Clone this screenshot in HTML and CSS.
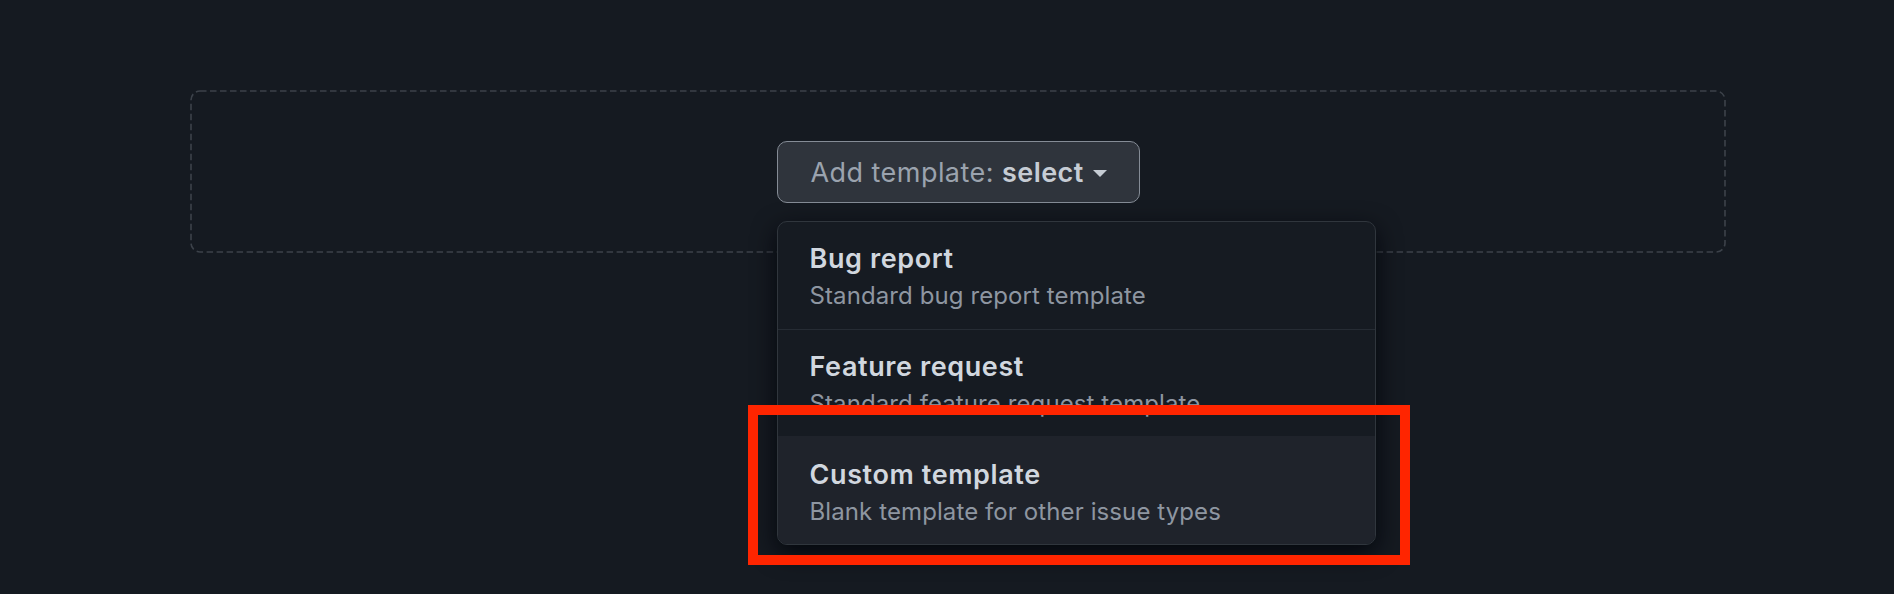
FILE: index.html
```html
<!DOCTYPE html>
<html lang="en">
<head>
<meta charset="utf-8">
<title>Add template</title>
<link rel="stylesheet" href="styles.css">
</head>
<body>
<main class="page">
  <section class="dropzone">
    <svg class="dash" width="1536" height="163" viewBox="0 0 1536 163" aria-hidden="true">
      <rect x="1" y="1" width="1534" height="161" rx="9" ry="9" fill="none" stroke="#3c424a" stroke-width="1.6" stroke-dasharray="6.5 3.5"/>
    </svg>
    <div class="menu">
      <button class="select-btn" type="button">
        <span class="btn-label">Add template: <strong>select</strong></span>
        <span class="caret"></span>
      </button>
      <div class="dropdown">
        <div class="item">
          <div class="item-title">Bug report</div>
          <div class="item-desc">Standard bug report template</div>
        </div>
        <div class="item">
          <div class="item-title">Feature request</div>
          <div class="item-desc">Standard feature request template</div>
        </div>
        <div class="item item-hover">
          <div class="item-title">Custom template</div>
          <div class="item-desc">Blank template for other issue types</div>
        </div>
      </div>
    </div>
  </section>
</main>
<div class="highlight"></div>
</body>
</html>
```

FILE: styles.css
```css
html, body {
  margin: 0;
  padding: 0;
}
body {
  background: #151a21;
  width: 1894px;
  height: 594px;
  overflow: hidden;
  position: relative;
  font-family: Inter, "Noto Sans", "Liberation Sans", sans-serif;
  -webkit-font-smoothing: antialiased;
}
.page {
  padding: 90px 0 0 190px;
}
.dropzone {
  position: relative;
  width: 1536px;
  height: 163px;
  box-sizing: border-box;
  display: flex;
  justify-content: center;
  padding-top: 51px;
}
.dash {
  position: absolute;
  left: 0;
  top: 0;
}
.menu {
  position: relative;
  height: 62px;
}
.select-btn {
  height: 62px;
  width: 363px;
  box-sizing: border-box;
  display: flex;
  align-items: center;
  gap: 9px;
  padding: 0 0 0 33px;
  background: #2f343c;
  border: 1px solid #858c96;
  border-radius: 10px;
  font-family: inherit;
  font-size: 27px;
  letter-spacing: 0.45px;
  color: #9ba3ae;
  cursor: pointer;
}
.btn-label strong {
  color: #c6ccd4;
  font-weight: 600;
}
.caret {
  width: 0;
  height: 0;
  border-left: 7.5px solid transparent;
  border-right: 7.5px solid transparent;
  border-top: 7.5px solid #c6ccd4;
  margin-top: 2px;
}
.dropdown {
  position: absolute;
  left: 0;
  top: 80px;
  width: 599px;
  box-sizing: border-box;
  background: #161b22;
  border: 1px solid #30363d;
  border-radius: 10px;
  overflow: hidden;
  box-shadow: 0 8px 24px rgba(1, 4, 9, 0.85);
}
.item {
  height: 107px;
  box-sizing: border-box;
  padding: 19px 32px 0 32px;
  border-top: 1px solid #262c34;
}
.item:first-child {
  border-top: none;
  height: 107px;
}
.item-hover {
  background: #1f232b;
  border-top: none;
  height: 108px;
  padding-top: 21px;
}
.item-title {
  font-size: 27px;
  line-height: 36px;
  font-weight: 600;
  letter-spacing: 0.6px;
  color: #d1d7df;
}
.item-desc {
  font-size: 24px;
  line-height: 38px;
  letter-spacing: 0.1px;
  color: #8e96a1;
}
.highlight {
  position: absolute;
  left: 748px;
  top: 405px;
  width: 662px;
  height: 160px;
  box-sizing: border-box;
  border: 10px solid #ff2500;
}
```
